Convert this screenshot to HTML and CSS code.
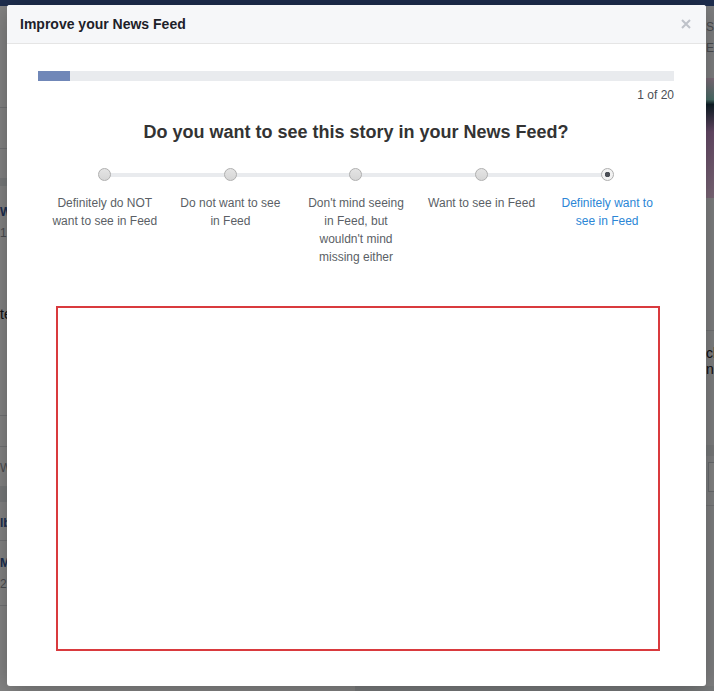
FILE: index.html
```html
<!DOCTYPE html>
<html lang="en">
<head>
    <meta charset="UTF-8">
    <meta name="viewport" content="width=device-width, initial-scale=1.0">
    <title>Improve your News Feed</title>
    <link rel="stylesheet" href="styles.css">
</head>
<body>
    <!-- Page behind the dialog -->
    <div class="page">
        <div class="topbar"></div>
        <div class="bg-left">
            <div class="bg-rule" style="top: 101px"></div>
            <div class="bg-rule" style="top: 142px"></div>
            <div class="bg-band" style="top: 172px; height: 8px"></div>
            <span class="bg-link" style="top: 198px">W</span>
            <span class="bg-meta" style="top: 219px">1</span>
            <span class="bg-text" style="top: 300px">te</span>
            <div class="bg-rule" style="top: 409px"></div>
            <div class="bg-rule" style="top: 440px"></div>
            <span class="bg-meta" style="top: 454px">W</span>
            <div class="bg-band" style="top: 480px; height: 16px"></div>
            <span class="bg-link" style="top: 509px">lb</span>
            <div class="bg-rule" style="top: 534px"></div>
            <span class="bg-link" style="top: 549px">M</span>
            <span class="bg-meta" style="top: 570px">2</span>
            <div class="bg-rule" style="top: 599px"></div>
        </div>
        <div class="bg-right">
            <span class="bg-meta" style="top: 13px">S</span>
            <span class="bg-meta" style="top: 34px">E</span>
            <div class="bg-photo"></div>
            <div class="bg-rule" style="top: 324px"></div>
            <span class="bg-text" style="top: 339px">cl</span>
            <span class="bg-text" style="top: 355px">ns</span>
            <div class="bg-band" style="top: 439px; height: 11px"></div>
            <div class="bg-box"></div>
            <div class="bg-rule" style="top: 499px"></div>
        </div>
        <div class="bg-bottom"></div>
    </div>
    <div class="overlay"></div>

    <div class="dialog">
        <div class="dialog-header">
            <h2 class="dialog-title">Improve your News Feed</h2>
            <button class="dialog-close" aria-label="Close">
                <svg width="10" height="10" viewBox="0 0 10 10"><path d="M1 1L9 9M9 1L1 9" stroke="#bec2c9" stroke-width="2"/></svg>
            </button>
        </div>
        <div class="dialog-body">
            <div class="progress"><div class="progress-fill" style="width: 5%"></div></div>
            <div class="progress-count">1 of 20</div>

            <h3 class="question">Do you want to see this story in your News Feed?</h3>

            <div class="scale">
                <div class="scale-line"></div>
                <label class="scale-option">
                    <span class="radio"></span>
                    <span class="scale-label">Definitely do NOT want to see in Feed</span>
                </label>
                <label class="scale-option">
                    <span class="radio"></span>
                    <span class="scale-label">Do not want to see in Feed</span>
                </label>
                <label class="scale-option">
                    <span class="radio"></span>
                    <span class="scale-label narrow">Don't mind seeing in Feed, but wouldn't mind missing either</span>
                </label>
                <label class="scale-option">
                    <span class="radio"></span>
                    <span class="scale-label">Want to see in Feed</span>
                </label>
                <label class="scale-option selected">
                    <span class="radio"></span>
                    <span class="scale-label">Definitely want to see in Feed</span>
                </label>
            </div>

            <div class="story-frame"></div>
        </div>
    </div>
</body>
</html>
```

FILE: styles.css
```css
body {
    margin: 0;
    font-family: 'Liberation Sans', Arial, Helvetica, sans-serif;
    background: #e9ebee;
    height: 691px;
    overflow: hidden;
}

/* Background page */
.page {
    position: relative;
    height: 691px;
}

.topbar {
    height: 6px;
    background: #3b5998;
}

.bg-left,
.bg-right {
    position: absolute;
    top: 6px;
    height: 680px;
    background: #fff;
    overflow: hidden;
}

.bg-left {
    left: 0;
    width: 40px;
}

.bg-right {
    left: 700px;
    width: 14px;
    background: #f6f7f9;
}

.bg-rule {
    position: absolute;
    left: 0;
    right: 0;
    height: 1px;
    background: #dddfe2;
}

.bg-band {
    position: absolute;
    left: 0;
    right: 0;
    background: #e9ebee;
}

.bg-link,
.bg-meta,
.bg-text {
    position: absolute;
    left: 0;
    font-size: 12px;
    line-height: 16px;
    white-space: nowrap;
}

.bg-right .bg-link,
.bg-right .bg-meta,
.bg-right .bg-text {
    left: 6px;
}

.bg-link {
    color: #365899;
    font-weight: bold;
}

.bg-meta {
    color: #90949c;
}

.bg-text {
    color: #1d2129;
    font-size: 14px;
}

.bg-photo {
    position: absolute;
    top: 72px;
    left: 6px;
    width: 40px;
    height: 120px;
    background: linear-gradient(180deg, #f4d2ea 0%, #8fd3c8 18%, #1d3a4a 22%, #c690c8 45%, #f0c8e8 100%);
}

.bg-box {
    position: absolute;
    top: 456px;
    left: 8px;
    width: 40px;
    height: 28px;
    border: 1px solid #ccd0d5;
    background: #fff;
}

.bg-bottom {
    position: absolute;
    left: 0;
    width: 355px;
    top: 686px;
    height: 5px;
    background: #fff;
}

.overlay {
    position: absolute;
    inset: 0;
    background: rgba(0, 0, 0, 0.48);
}

/* Dialog */
.dialog {
    position: absolute;
    left: 7px;
    top: 5px;
    width: 699px;
    height: 681px;
    background: #fff;
    border-radius: 3px;
    box-shadow: 0 2px 26px rgba(0, 0, 0, 0.3);
    overflow: hidden;
}

.dialog-header {
    display: flex;
    align-items: center;
    justify-content: space-between;
    height: 38px;
    padding: 0 12px 0 13px;
    background: #f6f7f9;
    border-bottom: 1px solid #e5e5e5;
}

.dialog-title {
    margin: 0;
    font-size: 14px;
    font-weight: bold;
    color: #1d2129;
}

.dialog-close {
    display: flex;
    align-items: center;
    justify-content: center;
    width: 16px;
    height: 16px;
    padding: 0;
    border: none;
    background: none;
    cursor: pointer;
}

.dialog-body {
    padding: 27px 32px 36px 31px;
}

.progress {
    height: 10px;
    background: #e9ebee;
}

.progress-fill {
    height: 100%;
    background: #7087b8;
}

.progress-count {
    margin-top: 6px;
    text-align: right;
    font-size: 12px;
    line-height: 16px;
    color: #4b4f56;
}

.question {
    margin: 17px 0 0;
    text-align: center;
    font-size: 18px;
    line-height: 24px;
    font-weight: bold;
    color: #333;
}

.scale {
    position: relative;
    display: grid;
    grid-template-columns: repeat(5, 1fr);
    width: 628px;
    margin: 24px auto 0;
}

.scale-line {
    position: absolute;
    top: 5px;
    left: 10%;
    right: 10%;
    height: 4px;
    background: #e9ebee;
}

.scale-option {
    position: relative;
    display: flex;
    flex-direction: column;
    align-items: center;
    cursor: pointer;
}

.radio {
    box-sizing: border-box;
    width: 13px;
    height: 13px;
    border-radius: 50%;
    border: 1px solid #afafaf;
    background: linear-gradient(180deg, #e4e4e4, #d6d6d6);
}

.selected .radio {
    background: radial-gradient(circle, #4b4f56 0 2.5px, #f2f2f2 3px);
}

.scale-label {
    width: 110px;
    margin-top: 13px;
    text-align: center;
    font-size: 12px;
    line-height: 18px;
    color: #5b5f66;
}

.scale-label.narrow {
    width: 100px;
}

.selected .scale-label {
    color: #2b86d6;
}

.story-frame {
    box-sizing: border-box;
    width: 604px;
    height: 345px;
    margin: 40px 0 0 18px;
    border: 2px solid #d93a3e;
}
```
